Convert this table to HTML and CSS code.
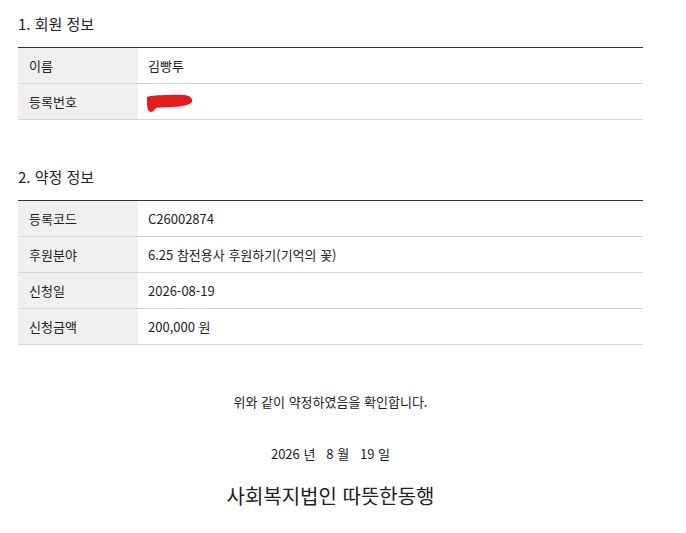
FILE: index.html
```html
<!DOCTYPE html>
<html lang="ko">
<head>
<meta charset="utf-8">
<link rel="stylesheet" href="styles.css">
</head>
<body>
<div class="wrap">
  <section class="sec sec-1">
    <h2 class="sec-title">1. 회원 정보</h2>
    <table class="info">
      <tr><th>이름</th><td>김빵투</td></tr>
      <tr><th>등록번호</th><td><span class="redact"><svg width="46" height="18" viewBox="0 0 46 18"><path d="M0 3 C4 1.5,12 1.2,20 1 C28 0.8,35 0.5,40 1.5 C44 2.5,46 5.5,45 8 C43 11,35 12.5,26 13 C18 13.5,12 13.5,9 14 C7.5 15.5,6.5 18,4 18 C1.5 18,0.5 15,0.2 12 C0 9,0 5.5,0 3 Z" fill="#e31c1c"/></svg></span></td></tr>
    </table>
  </section>
  <section class="sec sec-2">
    <h2 class="sec-title">2. 약정 정보</h2>
    <table class="info">
      <tr><th>등록코드</th><td>C26002874</td></tr>
      <tr><th>후원분야</th><td>6.25 참전용사 후원하기(기억의 꽃)</td></tr>
      <tr><th>신청일</th><td>2026-08-19</td></tr>
      <tr><th>신청금액</th><td>200,000 원</td></tr>
    </table>
  </section>
  <p class="confirm">위와 같이 약정하였음을 확인합니다.</p>
  <p class="date">2026 년 &nbsp; 8 월 &nbsp; 19 일</p>
  <p class="org">사회복지법인 따뜻한동행</p>
</div>
</body>
</html>
```
FILE: styles.css
```css
* { box-sizing: border-box; }
html, body { margin: 0; padding: 0; background: #fff; }
body {
  font-family: "Noto Sans CJK KR", "Noto Sans", sans-serif;
  color: #222;
}
.wrap {
  width: 625px;
  margin-left: 18px;
  padding-top: 13px;
}
.sec-title {
  margin: 0 0 12px;
  font-size: 15px;
  line-height: 22px;
  font-weight: 400;
  color: #222;
}
.sec-2 { margin-top: 46px; }
.info {
  width: 100%;
  border-collapse: collapse;
  border-top: 1px solid #333;
  font-size: 13px;
}
.info th, .info td {
  height: 36px;
  padding: 0;
  border-bottom: 1px solid #d6d6d6;
  text-align: left;
  font-weight: 400;
  vertical-align: middle;
}
.info th {
  width: 120px;
  background: #f0f0f0;
  padding-left: 11px;
}
.info td { padding-left: 10px; }
.redact { display: inline-block; vertical-align: middle; line-height: 0; margin-left: -1px; }
.confirm, .date, .org {
  margin: 0;
  text-align: center;
}
.confirm {
  margin-top: 47px;
  font-size: 13px;
  line-height: 20px;
}
.date {
  margin-top: 32px;
  font-size: 13px;
  line-height: 20px;
  white-space: pre;
}
.org {
  margin-top: 18px;
  font-size: 20px;
  line-height: 28px;
}
```
